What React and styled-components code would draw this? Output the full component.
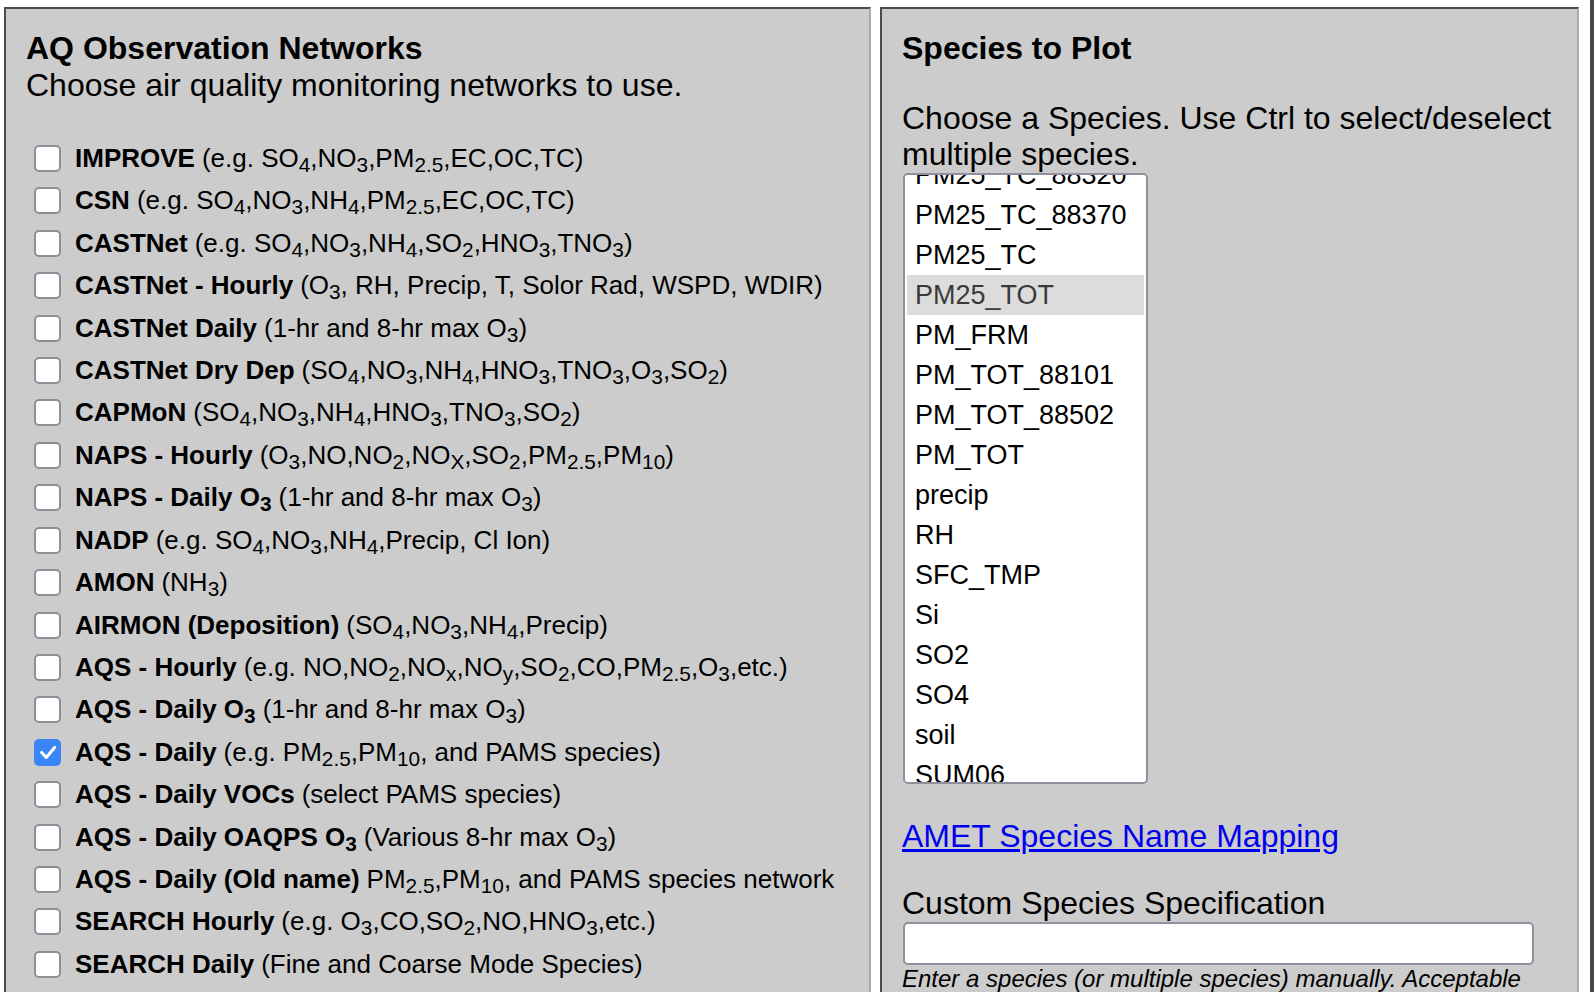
import React, { useLayoutEffect, useRef } from 'react';
import styled, { createGlobalStyle } from 'styled-components';

const GlobalStyle = createGlobalStyle`
  html, body {
    margin: 0;
    padding: 0;
    background: #ffffff;
  }
  body {
    font-family: "Liberation Sans", Arial, Helvetica, sans-serif;
    color: #000;
  }
`;

const Page = styled.div`
  display: flex;
  align-items: flex-start;
  gap: 9px;
  padding: 7px 0 0 4px;
`;

// dark edge of the window on the right side of the screenshot
const WindowEdge = styled.div`
  position: fixed;
  top: 0;
  right: 0;
  width: 4px;
  height: 100vh;
  background: #474747;
`;

const Panel = styled.section`
  box-sizing: border-box;
  flex: none;
  width: ${({ $width }) => $width}px;
  min-height: 1100px;
  background: #cccccc;
  border-style: solid;
  border-width: 2px;
  border-color: #4b4b4b #a9a9a9 #a9a9a9 #4b4b4b;
  padding: 21px 20px 40px 20px;
  font-size: 32px;
  line-height: 36.6px;
`;

const Heading = styled.div`
  font-weight: bold;
`;

const Para = styled.div`
  margin-top: ${({ $top }) => $top || 0}px;
`;

const NetworkList = styled.div`
  display: flex;
  flex-direction: column;
  margin-top: 34px;
`;

const Row = styled.label`
  display: flex;
  align-items: center;
  height: 42.43px;
  font-size: 26px;
  line-height: normal;
  white-space: nowrap;
`;

const Box = styled.span`
  box-sizing: border-box;
  flex: none;
  width: 27px;
  height: 27px;
  margin: 0 14px 0 8px;
  border-radius: 5px;
  border: 2px solid ${({ $checked }) => ($checked ? '#3b86f6' : '#8e8e99')};
  background: ${({ $checked }) => ($checked ? '#3b86f6' : '#ffffff')};
  display: flex;
  align-items: center;
  justify-content: center;
`;

const Name = styled.b`
  font-weight: bold;
  margin-right: 7px;
`;

const Sub = styled.sub`
  font-size: 0.8em;
  line-height: 0;
  vertical-align: -0.25em;
`;

const Listbox = styled.div`
  box-sizing: border-box;
  position: relative;
  width: 245px;
  height: 611px;
  margin-left: 1px;
  padding: 0 2px;
  background: #ffffff;
  border: 2px solid #8f8f9d;
  border-radius: 5px;
  overflow-y: auto;
  scrollbar-width: none;
  font-size: 27px;
  line-height: normal;
  &::-webkit-scrollbar {
    display: none;
  }
`;

const Option = styled.div`
  height: 40px;
  line-height: 40px;
  padding: 0 8px;
  white-space: nowrap;
  background: ${({ $selected }) => ($selected ? '#dcdcdc' : 'transparent')};
  color: ${({ $selected }) => ($selected ? '#3a3a3a' : '#000')};
`;

const MapLink = styled.a`
  color: #0000ee;
  text-decoration: underline;
`;

const TextInput = styled.input`
  display: block;
  box-sizing: border-box;
  width: 631px;
  height: 43px;
  margin: 0 0 0 1px;
  background: #ffffff;
  border: 2px solid #8f8f9d;
  border-radius: 5px;
  font-size: 26px;
`;

const Note = styled.div`
  font-size: 24px;
  font-style: italic;
  line-height: normal;
`;

// "SO{4},NO{3}" -> SO<sub>4</sub>,NO<sub>3</sub>
const chem = (text) =>
  text.split(/(\{[^}]*\})/).map((part, i) =>
    part.startsWith('{') ? <Sub key={i}>{part.slice(1, -1)}</Sub> : part
  );

const networks = [
  { name: 'IMPROVE', desc: '(e.g. SO{4},NO{3},PM{2.5},EC,OC,TC)' },
  { name: 'CSN', desc: '(e.g. SO{4},NO{3},NH{4},PM{2.5},EC,OC,TC)' },
  { name: 'CASTNet', desc: '(e.g. SO{4},NO{3},NH{4},SO{2},HNO{3},TNO{3})' },
  { name: 'CASTNet - Hourly', desc: '(O{3}, RH, Precip, T, Solor Rad, WSPD, WDIR)' },
  { name: 'CASTNet Daily', desc: '(1-hr and 8-hr max O{3})' },
  { name: 'CASTNet Dry Dep', desc: '(SO{4},NO{3},NH{4},HNO{3},TNO{3},O{3},SO{2})' },
  { name: 'CAPMoN', desc: '(SO{4},NO{3},NH{4},HNO{3},TNO{3},SO{2})' },
  { name: 'NAPS - Hourly', desc: '(O{3},NO,NO{2},NO{X},SO{2},PM{2.5},PM{10})' },
  { name: 'NAPS - Daily O{3}', desc: '(1-hr and 8-hr max O{3})' },
  { name: 'NADP', desc: '(e.g. SO{4},NO{3},NH{4},Precip, Cl Ion)' },
  { name: 'AMON', desc: '(NH{3})' },
  { name: 'AIRMON (Deposition)', desc: '(SO{4},NO{3},NH{4},Precip)' },
  { name: 'AQS - Hourly', desc: '(e.g. NO,NO{2},NO{x},NO{y},SO{2},CO,PM{2.5},O{3},etc.)' },
  { name: 'AQS - Daily O{3}', desc: '(1-hr and 8-hr max O{3})' },
  { name: 'AQS - Daily', desc: '(e.g. PM{2.5},PM{10}, and PAMS species)', checked: true },
  { name: 'AQS - Daily VOCs', desc: '(select PAMS species)' },
  { name: 'AQS - Daily OAQPS O{3}', desc: '(Various 8-hr max O{3})' },
  { name: 'AQS - Daily (Old name)', desc: 'PM{2.5},PM{10}, and PAMS species network' },
  { name: 'SEARCH Hourly', desc: '(e.g. O{3},CO,SO{2},NO,HNO{3},etc.)' },
  { name: 'SEARCH Daily', desc: '(Fine and Coarse Mode Species)' },
  { name: 'AERONET', desc: '(Aerosol Optical Depth)' },
];

const species = [
  'NO3', 'NOX', 'NOY', 'O3', 'OC', 'PM10', 'PM25_EC', 'PM25_FRM', 'PM25_OC',
  'PM25_TC_88305', 'PM25_TC_88320', 'PM25_TC_88370', 'PM25_TC', 'PM25_TOT',
  'PM_FRM', 'PM_TOT_88101', 'PM_TOT_88502', 'PM_TOT', 'precip', 'RH', 'SFC_TMP',
  'Si', 'SO2', 'SO4', 'soil', 'SUM06', 'T', 'TC', 'TNO3', 'WDIR', 'WSPD',
];

const CheckMark = () => (
  <svg width="22" height="22" viewBox="0 0 26 26" fill="none">
    <path d="M5.5 13.5 L11 19.5 L21 7.5" stroke="#fff" strokeWidth="3.6" strokeLinecap="round" strokeLinejoin="round" />
  </svg>
);

const SpeciesList = () => {
  const listRef = useRef(null);
  const firstRef = useRef(null);

  // the list is scrolled so that PM25_TC_88320 is half cut at the top
  useLayoutEffect(() => {
    if (listRef.current && firstRef.current) {
      listRef.current.scrollTop = firstRef.current.offsetTop + 20;
    }
  }, []);

  return (
    <Listbox ref={listRef}>
      {species.map((s) => (
        <Option key={s} ref={s === 'PM25_TC_88320' ? firstRef : null} $selected={s === 'PM25_TOT'}>
          {s}
        </Option>
      ))}
    </Listbox>
  );
};

export default function App() {
  return (
    <>
      <GlobalStyle />
      <Page>
        <Panel $width={867}>
          <Heading>AQ Observation Networks</Heading>
          <div>Choose air quality monitoring networks to use.</div>
          <NetworkList>
            {networks.map((n) => (
              <Row key={n.name}>
                <Box $checked={n.checked}>{n.checked && <CheckMark />}</Box>
                <Name>{chem(n.name)}</Name>
                <span>{chem(n.desc)}</span>
              </Row>
            ))}
          </NetworkList>
        </Panel>
        <Panel $width={699}>
          <Heading>Species to Plot</Heading>
          <Para $top={33}>Choose a Species. Use Ctrl to select/deselect multiple species.</Para>
          <SpeciesList />
          <Para $top={34}>
            <MapLink href="#">AMET Species Name Mapping</MapLink>
          </Para>
          <Para $top={31}>Custom Species Specification</Para>
          <TextInput type="text" />
          <Note>
            Enter a species (or multiple species) manually. Acceptable formats are a single
            species name (e.g. O3) or a comma separated list (e.g. SO4,NO3,NH4).
          </Note>
        </Panel>
      </Page>
      <WindowEdge />
    </>
  );
}
